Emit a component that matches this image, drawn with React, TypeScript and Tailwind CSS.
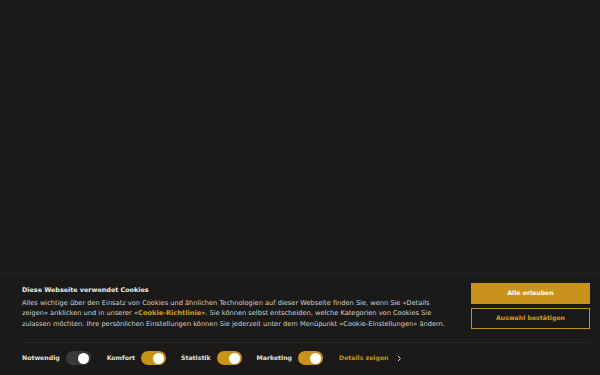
import React, { useState } from 'react';

const gold = 'bg-[#c9931b]';

function Toggle({ on, onChange, disabled }: { on: boolean; onChange?: () => void; disabled?: boolean }) {
  return (
    <button
      type="button"
      onClick={disabled ? undefined : onChange}
      className={`flex items-center w-[25px] h-[14px] rounded-full px-[2px] ${
        disabled ? 'bg-[#3a3938] justify-end' : on ? `${gold} justify-end` : 'bg-[#3a3938] justify-start'
      }`}
    >
      <span className="block w-[11px] h-[11px] rounded-full bg-white" />
    </button>
  );
}

export default function App() {
  const [komfort, setKomfort] = useState(true);
  const [statistik, setStatistik] = useState(true);
  const [marketing, setMarketing] = useState(true);

  return (
    <div
      className="h-[375px] bg-[#1b1a19] flex flex-col justify-end"
      style={{ fontFamily: '"DejaVu Sans", sans-serif' }}
    >
      {/* Cookie banner */}
      <div className="border-t border-[#222120] bg-[#1b1a19] pl-[22px] pr-[10px] pt-[10px] pb-[2px]">
        <div className="flex items-start">
          <div className="flex-1 pr-[20px] pt-[1px]">
            <h2 className="text-[6.4px] font-bold text-[#f2efe9] leading-[10px] mb-[3px]">
              Diese Webseite verwendet Cookies
            </h2>
            <p className="text-[6.65px] leading-[10.5px] text-[#d6d2cb] whitespace-nowrap">
              Alles wichtige über den Einsatz von Cookies und ähnlichen Technologien auf dieser Webseite finden Sie, wenn Sie «Details
              <br />
              zeigen» anklicken und in unserer «<span className="font-bold text-[#d39a1c]">Cookie-Richtlinie</span>». Sie können selbst entscheiden, welche Kategorien von Cookies Sie
              <br />
              zulassen möchten. Ihre persönlichen Einstellungen können Sie jederzeit unter dem Menüpunkt «Cookie-Einstellungen» ändern.
            </p>
          </div>
          <div className="w-[119px] shrink-0 flex flex-col gap-[4px] mt-[-1px]">
            <button className={`h-[21px] ${gold} text-white text-[6.2px] font-bold`}>Alle erlauben</button>
            <button className="h-[21px] border border-[#c9931b] text-[#d39a1c] text-[6.2px] font-bold">
              Auswahl bestätigen
            </button>
          </div>
        </div>

        <div className="border-t border-[#262524] mt-[13px]" />

        {/* Categories */}
        <div className="flex items-center h-[30px] text-[6.2px] font-bold text-[#e4e0d9]">
          <span>Notwendig</span>
          <span className="ml-[6px]"><Toggle on disabled /></span>
          <span className="ml-[16px]">Komfort</span>
          <span className="ml-[6px]"><Toggle on={komfort} onChange={() => setKomfort(!komfort)} /></span>
          <span className="ml-[15px]">Statistik</span>
          <span className="ml-[6px]"><Toggle on={statistik} onChange={() => setStatistik(!statistik)} /></span>
          <span className="ml-[15px]">Marketing</span>
          <span className="ml-[6px]"><Toggle on={marketing} onChange={() => setMarketing(!marketing)} /></span>
          <span className="ml-[16px] text-[#c9931b]">Details zeigen</span>
          <svg className="ml-[8px]" width="5" height="7" viewBox="0 0 5 7" fill="none">
            <path d="M1 1l2.5 2.5L1 6" stroke="#d6d2cb" strokeWidth="1" />
          </svg>
        </div>
      </div>
    </div>
  );
}
